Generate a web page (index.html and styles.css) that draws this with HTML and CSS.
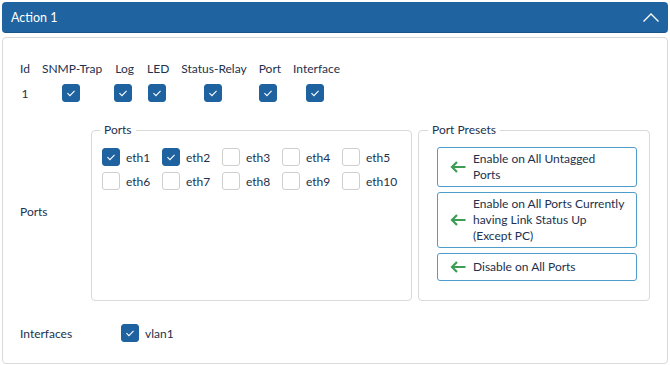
FILE: index.html
```html
<!DOCTYPE html>
<html lang="en">
<head>
  <meta charset="UTF-8">
  <meta name="viewport" content="width=device-width, initial-scale=1.0">
  <title>Action 1</title>
  <link rel="stylesheet" href="styles.css">
</head>
<body>
  <div class="head">
    <span>Action 1</span>
    <svg class="chev" width="16" height="9" viewBox="0 0 16 9"><polyline points="0.5,8.5 8,1 15.5,8.5" fill="none" stroke="#fff" stroke-width="1.3"/></svg>
  </div>

  <div class="panel">
    <table class="acts">
      <thead>
        <tr>
          <th>Id</th>
          <th>SNMP-Trap</th>
          <th>Log</th>
          <th>LED</th>
          <th>Status-Relay</th>
          <th>Port</th>
          <th>Interface</th>
        </tr>
      </thead>
      <tbody>
        <tr>
          <td>1</td>
          <td><span class="cb on"><svg viewBox="0 0 18 18"><polyline points="5,9.2 7.8,12 13,6.5"/></svg></span></td>
          <td><span class="cb on"><svg viewBox="0 0 18 18"><polyline points="5,9.2 7.8,12 13,6.5"/></svg></span></td>
          <td><span class="cb on"><svg viewBox="0 0 18 18"><polyline points="5,9.2 7.8,12 13,6.5"/></svg></span></td>
          <td><span class="cb on"><svg viewBox="0 0 18 18"><polyline points="5,9.2 7.8,12 13,6.5"/></svg></span></td>
          <td><span class="cb on"><svg viewBox="0 0 18 18"><polyline points="5,9.2 7.8,12 13,6.5"/></svg></span></td>
          <td><span class="cb on"><svg viewBox="0 0 18 18"><polyline points="5,9.2 7.8,12 13,6.5"/></svg></span></td>
        </tr>
      </tbody>
    </table>

    <div class="ports-row">
      <div class="row-label">Ports</div>
      <fieldset class="ports">
        <legend>Ports</legend>
        <div class="port-grid">
          <label class="opt"><span class="cb on"><svg viewBox="0 0 18 18"><polyline points="5,9.2 7.8,12 13,6.5"/></svg></span>eth1</label>
          <label class="opt"><span class="cb on"><svg viewBox="0 0 18 18"><polyline points="5,9.2 7.8,12 13,6.5"/></svg></span>eth2</label>
          <label class="opt"><span class="cb"></span>eth3</label>
          <label class="opt"><span class="cb"></span>eth4</label>
          <label class="opt"><span class="cb"></span>eth5</label>
          <label class="opt"><span class="cb"></span>eth6</label>
          <label class="opt"><span class="cb"></span>eth7</label>
          <label class="opt"><span class="cb"></span>eth8</label>
          <label class="opt"><span class="cb"></span>eth9</label>
          <label class="opt"><span class="cb"></span>eth10</label>
        </div>
      </fieldset>
      <fieldset class="presets">
        <legend>Port Presets</legend>
        <button class="preset">
          <svg class="arrow" width="16" height="12" viewBox="0 0 16 12"><path d="M15.5 6H2M7 1L2 6l5 5"/></svg>
          <span>Enable on All Untagged<br>Ports</span>
        </button>
        <button class="preset">
          <svg class="arrow" width="16" height="12" viewBox="0 0 16 12"><path d="M15.5 6H2M7 1L2 6l5 5"/></svg>
          <span>Enable on All Ports Currently having Link Status Up (Except PC)</span>
        </button>
        <button class="preset">
          <svg class="arrow" width="16" height="12" viewBox="0 0 16 12"><path d="M15.5 6H2M7 1L2 6l5 5"/></svg>
          <span>Disable on All Ports</span>
        </button>
      </fieldset>
    </div>

    <div class="if-row">
      <div class="if-label">Interfaces</div>
      <label class="opt"><span class="cb on"><svg viewBox="0 0 18 18"><polyline points="5,9.2 7.8,12 13,6.5"/></svg></span>vlan1</label>
    </div>
  </div>
</body>
</html>
```

FILE: styles.css
```css
body { margin: 2px; font-family: Lato, "Noto Sans", sans-serif; font-size: 12px; color: #22314d; background: #fff; }

.head { height: 31px; background: #1f64a0; border-radius: 4px; color: #fff; font-size: 12.5px; display: flex; align-items: center; justify-content: space-between; padding: 0 9px; border-bottom: 1px solid #1a5589; box-sizing: border-box; }
.head span { margin-top: 1px; }

.panel { margin-top: 4px; border: 1px solid #d9d9d9; border-radius: 4px; padding: 18px 17px 20px; height: 327px; box-sizing: border-box; }

.acts { border-collapse: collapse; }
.acts th { font-weight: normal; padding: 0 6px; height: 24px; text-align: center; }
.acts td { padding: 0 6px; height: 26px; text-align: center; }
.acts th:first-child, .acts td:first-child { padding-left: 0; }
.acts .cb { vertical-align: middle; margin-right: 3px; }

.cb { display: inline-block; width: 18px; height: 18px; box-sizing: border-box; border: 1px solid #cfcfcf; border-radius: 3px; background: #fff; flex: none; }
.cb.on { background: #1f62a0; border-color: #1f62a0; }
.cb svg { display: block; width: 16px; height: 16px; }
.cb polyline { fill: none; stroke: #fff; stroke-width: 1.2; }

.ports-row { display: grid; grid-template-columns: 71px 1fr 238px; margin-top: 16px; }
.row-label { align-self: center; }

fieldset { margin: 0; border: 1px solid #d9d9d9; border-radius: 4px; min-width: 0; }
legend { padding: 0 4px; line-height: 16px; }

.ports { padding: 10px 10px 10px; }
.ports legend { margin-left: -2px; }
.port-grid { display: grid; grid-template-columns: repeat(5, 60px); row-gap: 6px; }
.opt { display: flex; align-items: center; gap: 6px; }

.presets { margin-left: 6px; padding: 9px 12px 19px 18px; display: flex; flex-direction: column; gap: 5px; }
.presets legend { margin-left: -9px; }
.preset { width: 200px; min-height: 28px; display: flex; align-items: center; gap: 7px; text-align: left; padding: 3px 8px 3px 12px; border: 1px solid #4d9cca; border-radius: 3px; background: #fff; font: inherit; color: inherit; line-height: 16px; box-sizing: border-box; }
.arrow { flex: none; }
.arrow path { fill: none; stroke: #3d9d55; stroke-width: 2.2; }

.if-row { display: flex; align-items: center; margin-top: 23px; }
.if-label { width: 101px; }
```
